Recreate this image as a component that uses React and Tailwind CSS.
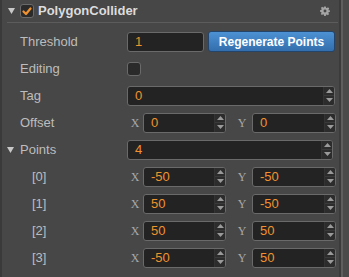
import React from "react";

const font = { fontFamily: '"Liberation Sans", Arial, sans-serif' };

function Spinner() {
  return (
    <div className="flex flex-col w-[11px] h-full border-l border-[#333] bg-[#2c2c2c]">
      <div className="flex-1 flex items-center justify-center border-b border-[#3a3a3a]">
        <svg width="7" height="4" viewBox="0 0 7 4"><path d="M0 4 L3.5 0 L7 4 Z" fill="#9a9a9a" /></svg>
      </div>
      <div className="flex-1 flex items-center justify-center">
        <svg width="7" height="4" viewBox="0 0 7 4"><path d="M0 0 L3.5 4 L7 0 Z" fill="#9a9a9a" /></svg>
      </div>
    </div>
  );
}

function NumInput({ value, className = "", spinner = true }) {
  return (
    <div className={"h-[20px] flex items-stretch rounded-[3px] border border-[#6a6a6a] bg-[#232323] overflow-hidden " + className}>
      <div className="flex-1 flex items-center pl-[7px] text-[13px] text-[#f0922e] leading-none">{value}</div>
      {spinner && <Spinner />}
    </div>
  );
}

function Axis({ ch }) {
  return (
    <span
      className="w-[16px] text-center text-[12px] text-[#a8a8a8] leading-none"
      style={{ fontFamily: '"Liberation Serif", serif' }}
    >
      {ch}
    </span>
  );
}

function Vec({ x, y }) {
  return (
    <div className="flex items-center">
      <Axis ch="X" />
      <NumInput value={x} className="w-[83px]" />
      <div className="w-[8px]" />
      <Axis ch="Y" />
      <div className="w-[2px]" />
      <NumInput value={y} className="w-[84px]" />
    </div>
  );
}

function Row({ label, indent = 0, tri = false, children }) {
  return (
    <div className="h-[27px] flex items-center">
      <div className="w-[125px] flex items-center text-[13px] text-[#bdbdbd]">
        {tri ? (
          <span className="w-[18px] flex justify-start pl-[5px]">
            <svg width="7" height="6" viewBox="0 0 7 6"><path d="M0 0 L7 0 L3.5 6 Z" fill="#c8c8c8" /></svg>
          </span>
        ) : (
          <span className="w-[18px]" />
        )}
        <span style={{ marginLeft: indent }}>{label}</span>
      </div>
      {children}
    </div>
  );
}

export default function App() {
  const points = [
    ["-50", "-50"],
    ["50", "-50"],
    ["50", "50"],
    ["-50", "50"],
  ];
  return (
    <div className="w-[349px] h-[277px] flex bg-[#474747] overflow-hidden" style={font}>
      <div className="w-[2px] bg-[#3a3a3a]" />
      <div className="w-[337px] flex flex-col">
        <div className="h-[22px] flex items-center relative">
          <span className="w-[18px] flex pl-[6px]">
            <svg width="7" height="6" viewBox="0 0 7 6"><path d="M0 0 L7 0 L3.5 6 Z" fill="#c8c8c8" /></svg>
          </span>
          <div className="w-[14px] h-[14px] rounded-[3px] border border-[#6a6a6a] bg-[#2a2a2a] flex items-center justify-center">
            <svg width="10" height="9" viewBox="0 0 10 9">
              <path d="M1.5 4.5 L4 7 L8.5 1.5" stroke="#f0922e" strokeWidth="2.2" fill="none" strokeLinecap="round" strokeLinejoin="round" />
            </svg>
          </div>
          <span className="ml-[4px] text-[13px] font-bold text-[#dcdcdc]">PolygonCollider</span>
          <div className="flex-1" />
          <svg className="mr-[9px]" width="10" height="10" viewBox="0 0 24 24">
            <path
              fill="#a5a5a5"
              d="M10 1h4l.6 3.1a8 8 0 0 1 2 .9l2.7-1.8 2.8 2.8-1.8 2.7a8 8 0 0 1 .9 2L24 10v4l-3.1.6a8 8 0 0 1-.9 2l1.8 2.7-2.8 2.8-2.7-1.8a8 8 0 0 1-2 .9L14 24h-4l-.6-3.1a8 8 0 0 1-2-.9l-2.7 1.8-2.8-2.8 1.8-2.7a8 8 0 0 1-.9-2L0 14v-4l3.1-.6a8 8 0 0 1 .9-2L2.2 4.7 5 1.9l2.7 1.8a8 8 0 0 1 2-.9Z M12 8.5a3.5 3.5 0 1 0 0 7 3.5 3.5 0 1 0 0-7Z"
              fillRule="evenodd"
            />
          </svg>
        </div>
        <div className="h-px bg-[#5c5c5c] ml-[5px] mr-[1px]" />
        <div className="h-[5px]" />
        <Row label="Threshold">
          <NumInput value="1" spinner={false} className="w-[77px]" />
          <button className="ml-[4px] w-[127px] h-[21px] rounded-[3px] border border-[#23456b] bg-gradient-to-b from-[#4d92d4] to-[#336ead] text-white text-[12px] font-bold leading-none">
            Regenerate Points
          </button>
        </Row>
        <Row label="Editing">
          <div className="w-[14px] h-[14px] rounded-[3px] border border-[#6a6a6a] bg-[#2a2a2a]" />
        </Row>
        <Row label="Tag">
          <NumInput value="0" className="w-[208px]" />
        </Row>
        <Row label="Offset">
          <Vec x="0" y="0" />
        </Row>
        <Row label="Points" tri>
          <NumInput value="4" className="w-[206px]" />
        </Row>
        {points.map((p, i) => (
          <Row key={i} label={`[${i}]`} indent={12}>
            <Vec x={p[0]} y={p[1]} />
          </Row>
        ))}
      </div>
      <div className="w-[2px] bg-[#3b3b3b]" />
      <div className="w-[2px] bg-[#5e5e5e]" />
      <div className="flex-1 bg-[#4a4a4a]" />
    </div>
  );
}
